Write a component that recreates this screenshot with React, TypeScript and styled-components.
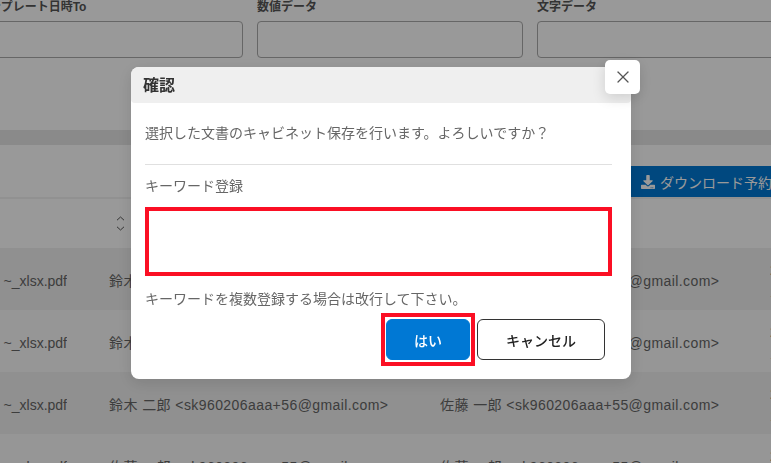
import React from 'react';
import styled, { createGlobalStyle } from 'styled-components';
import { FaDownload } from 'react-icons/fa';
import { X } from 'lucide-react';

const GlobalStyle = createGlobalStyle`
  html, body {
    margin: 0;
    width: 771px;
    height: 463px;
    overflow: hidden;
    background: #fff;
    font-family: "Liberation Sans", "Noto Sans CJK JP", sans-serif;
    color: #666;
  }
  * {
    box-sizing: border-box;
  }
`;

const Page = styled.div`
  width: 771px;
  height: 463px;
  overflow: hidden;
`;

const FilterRow = styled.div`
  display: grid;
  grid-template-columns: repeat(3, 266px);
  column-gap: 14px;
  margin-left: -23px;
  height: 130px;
`;

const Field = styled.div`
  display: flex;
  flex-direction: column;
`;

const FieldLabel = styled.label`
  font-size: 12px;
  font-weight: bold;
  line-height: 14px;
  height: 21px;
  color: #555;
`;

const FieldInput = styled.div`
  height: 37px;
  border: 1px solid #aaa;
  border-radius: 4px;
  background: #fff;
`;

const Band = styled.div`
  height: 15px;
  background: #e6e6e6;
`;

const Toolbar = styled.div`
  height: 54px;
  display: flex;
  align-items: flex-start;
  justify-content: flex-end;
  padding-top: 21px;
  border-bottom: 2px solid #f2f2f2;
`;

const DownloadButton = styled.button`
  flex: none;
  width: 200px;
  height: 31px;
  margin-right: -29px;
  padding: 0 0 0 41px;
  display: flex;
  align-items: center;
  gap: 5px;
  border: none;
  background: #0078d4;
  color: #fff;
  font: inherit;
  font-size: 14px;
  white-space: nowrap;
`;

const HeaderRow = styled.div`
  height: 49px;
  display: flex;
  align-items: center;
  padding-left: 116px;
  color: #555;
`;

const Row = styled.div<{ $striped: boolean }>`
  height: 62px;
  padding-top: 3px;
  display: grid;
  grid-template-columns: 67px 42px 331px 330px 1fr;
  align-items: center;
  font-size: 14px;
  line-height: 22px;
  letter-spacing: 0.42px;
  white-space: nowrap;
  background: ${(p) => (p.$striped ? '#f0f0f0' : '#fafafa')};
`;

const FileCell = styled.div`
  display: flex;
  justify-content: flex-end;
  overflow: hidden;
  letter-spacing: 0;
  white-space: pre;
`;

const Spacer = styled.div``;

const Cell = styled.div`
  overflow: hidden;
`;

const Overlay = styled.div`
  position: fixed;
  inset: 0;
  background: rgba(0, 0, 0, 0.4);
`;

const Modal = styled.div`
  position: absolute;
  top: 67px;
  left: 131px;
  width: 500px;
  height: 312px;
  display: flex;
  flex-direction: column;
  background: #fff;
  border-radius: 8px;
  box-shadow: 0 4px 16px rgba(0, 0, 0, 0.12);
`;

const ModalHeader = styled.div`
  height: 36px;
  flex: none;
  padding: 0 0 2px 12px;
  display: flex;
  align-items: center;
  background: #efefef;
  border-radius: 8px 8px 4px 4px;
  font-size: 16px;
  font-weight: bold;
  color: #333;
`;

const CloseButton = styled.button`
  position: absolute;
  top: -7px;
  right: -9px;
  width: 35px;
  height: 34px;
  padding: 0;
  display: flex;
  align-items: center;
  justify-content: center;
  border: none;
  border-radius: 5px;
  background: #fff;
  color: #555;
  box-shadow: 0 4px 14px rgba(0, 0, 0, 0.14);
`;

const ModalBody = styled.div`
  flex: 1;
  display: flex;
  flex-direction: column;
  padding: 20px 19px 0 14px;
  font-size: 14px;
  color: #666;
`;

const Message = styled.p`
  margin: 0;
  line-height: 20px;
  height: 41px;
`;

const Divider = styled.hr`
  margin: 0;
  border: none;
  border-top: 1px solid #e0e0e0;
`;

const KeywordLabel = styled.div`
  margin-top: 11px;
  line-height: 20px;
  height: 31px;
`;

const KeywordInput = styled.div`
  width: 467px;
  height: 69px;
  border: 4px solid #fb0f24;
  background: #fff;
`;

const Hint = styled.div`
  margin-top: 13px;
  line-height: 20px;
`;

const Actions = styled.div`
  margin-top: 10px;
  display: flex;
  justify-content: flex-end;
  gap: 7px;
  padding-right: 7px;
`;

const Highlight = styled.div`
  margin: -6px -5px 0 0;
  width: 94px;
  height: 53px;
  padding: 2px 1px;
  border: 4px solid #fb0f24;
  background: #fff;
  display: flex;
`;

const ActionButton = styled.button<{ $primary?: boolean }>`
  height: 41px;
  width: ${(p) => (p.$primary ? '84px' : '128px')};
  border-radius: 6px;
  border: 1px solid ${(p) => (p.$primary ? '#0078d4' : '#333')};
  background: ${(p) => (p.$primary ? '#0078d4' : '#fff')};
  color: ${(p) => (p.$primary ? '#fff' : '#222')};
  font: inherit;
  font-size: 14px;
  font-weight: 500;
`;

const SortIcon = () => (
  <svg width="9" height="15" viewBox="0 0 9 15" fill="none" stroke="currentColor" strokeWidth="1">
    <path d="M1 4.2 L4.5 1 L8 4.2" />
    <path d="M1 10.8 L4.5 14 L8 10.8" />
  </svg>
);

const rows = [
  { sender: '鈴木 二郎', no: 56 },
  { sender: '鈴木 二郎', no: 56 },
  { sender: '鈴木 二郎', no: 56 },
  { sender: '佐藤 一郎', no: 55 },
];

const App: React.FC = () => {
  return (
    <Page>
      <GlobalStyle />
      <FilterRow>
        <Field>
          <FieldLabel>テンプレート日時To</FieldLabel>
          <FieldInput />
        </Field>
        <Field>
          <FieldLabel>数値データ</FieldLabel>
          <FieldInput />
        </Field>
        <Field>
          <FieldLabel>文字データ</FieldLabel>
          <FieldInput />
        </Field>
      </FilterRow>
      <Band />
      <Toolbar>
        <DownloadButton>
          <FaDownload size={14} />
          ダウンロード予約
        </DownloadButton>
      </Toolbar>
      <HeaderRow>
        <SortIcon />
      </HeaderRow>
      {rows.map((row, i) => (
        <Row key={i} $striped={i % 2 === 0}>
          <FileCell>
            <span>テンプレート ~_xlsx.pdf</span>
          </FileCell>
          <Spacer />
          <Cell>
            {row.sender} &lt;sk960206aaa+{row.no}@gmail.com&gt;
          </Cell>
          <Cell>佐藤 一郎 &lt;sk960206aaa+55@gmail.com&gt;</Cell>
          <Cell>
            2023/04/01
            <br />
            12:00:00
          </Cell>
        </Row>
      ))}
      <Overlay>
        <Modal>
          <ModalHeader>確認</ModalHeader>
          <CloseButton aria-label="close">
            <X size={20} strokeWidth={1.5} />
          </CloseButton>
          <ModalBody>
            <Message>選択した文書のキャビネット保存を行います。よろしいですか？</Message>
            <Divider />
            <KeywordLabel>キーワード登録</KeywordLabel>
            <KeywordInput />
            <Hint>キーワードを複数登録する場合は改行して下さい。</Hint>
            <Actions>
              <Highlight>
                <ActionButton $primary>はい</ActionButton>
              </Highlight>
              <ActionButton>キャンセル</ActionButton>
            </Actions>
          </ModalBody>
        </Modal>
      </Overlay>
    </Page>
  );
};

export default App;
